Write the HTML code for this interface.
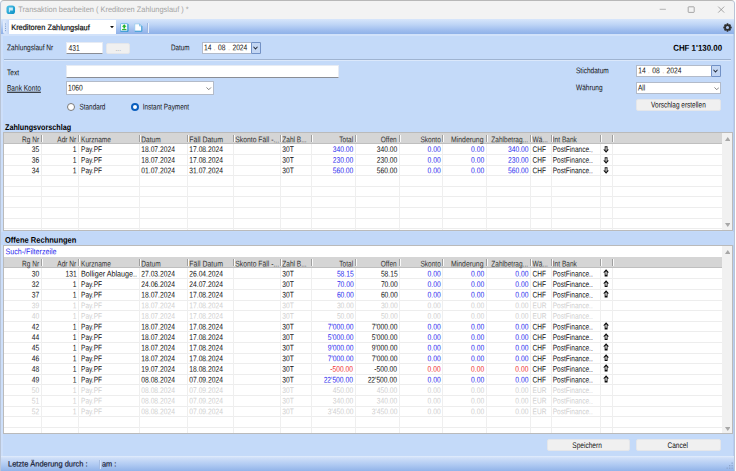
<!DOCTYPE html><html lang="de"><head><meta charset="utf-8"><title>Transaktion bearbeiten</title><style>
*{margin:0;padding:0;box-sizing:border-box}
html,body{width:736px;height:471px;overflow:hidden;background:#fff}
body{font-family:"Liberation Sans",sans-serif;position:relative}
#win{position:absolute;left:0;top:0;width:735px;height:472px;background:#c4daf9;border:1px solid #b9c4d6;border-top-color:#b8b8b8;border-bottom:none;border-radius:4px 4px 0 0;overflow:hidden}
#win div,#win span,#win svg{position:absolute}
.t{white-space:nowrap;line-height:10px;height:10px;font-size:8.2px;color:#111;transform-origin:0 50%}
.t.r{transform-origin:100% 50%}
.b{font-weight:bold;font-size:8.3px;color:#000}
.seg{font-size:8.4px}
.titlebar{background:#f3f3f3}
.toolbar{background:linear-gradient(#d7e6fb 0%,#bcd3f5 40%,#a3c0ef 70%,#8fb1e8 100%)}
.inp{background:#fff;border:1px solid #e6ebf4;border-bottom-color:#8a8d94}
.inp2{background:#fff;border:1px solid #b3bbc9}
.btn{background:#f0f0f0;border:1px solid #e4e6ea;border-radius:2px}
.tbl{background:#fff;border:1px solid #bababa;overflow:hidden}
.hdr{background:#d5d5d5;border-bottom:1px solid #bfbfbf}
.hl{background:#ededed;height:1px}
.vl{background:#efefef;width:1px}
.hs{background:#9f9f9f;width:1px;box-shadow:1px 0 0 #fafafa}
.sb{background:#f1f1f1}
.status{background:linear-gradient(#e3edfc 0%,#cfdff8 12%,#b3ccf3 50%,#8db0e8 100%)}
</style></head><body><div id="win">
<div id="c" style="left:-1px;top:-1px;width:736px;height:472px">
<div class="titlebar" style="left:0.00px;top:0.00px;width:736.00px;height:19.20px;"></div>
<svg style="left:6px;top:5px" width="9.500" height="9.500" viewBox="0 0 20 20"><defs><linearGradient id="ig" x1="0" y1="0" x2="1" y2="1"><stop offset="0" stop-color="#4fc3e8"/><stop offset="1" stop-color="#0a8fc4"/></linearGradient></defs><rect x="1" y="1" width="18" height="18" rx="6" fill="url(#ig)"/><path d="M6 5h8.500v6.500H8.200v4H6z" fill="#e8f7fd" fill-opacity=".85"/></svg>
<span class="t seg" style="top:4px;left:18px;transform:translate(0.30px,0.90px) scaleX(0.94) rotate(.03deg);color:#a4a4a4;font-size:7.9px;">Transaktion bearbeiten ( Kreditoren Zahlungslauf ) *</span>
<svg style="left:655px;top:3px" width="75" height="14" viewBox="0 0 75 14"><g stroke="#858585" stroke-width="0.7" fill="none"><path d="M4.700 6.300h6.200" stroke="#9a9a9a"/><rect x="33.2" y="3.8" width="6" height="5.6" rx="0.6"/><path d="M63.2 3.6l6 6M69.2 3.6l-6 6"/></g></svg>
<div class="toolbar" style="left:0.00px;top:19.30px;width:736.00px;height:14.70px;"></div>
<div class="" style="left:0.00px;top:34.00px;width:736.00px;height:1.50px;background:#d2e2fa"></div>
<div class="" style="left:2.50px;top:20.00px;width:6.50px;height:14.00px;background:linear-gradient(90deg,#e4edfc,#c3d7f6);border-radius:2px 0 0 2px"></div>
<svg style="left:4px;top:23px" width="3" height="9" viewBox="0 0 3 9"><g fill="#7f9fd0"><rect x="1" y="0.5" width="1" height="1"/><rect x="1" y="2.7" width="1" height="1"/><rect x="1" y="4.9" width="1" height="1"/><rect x="1" y="7.1" width="1" height="1"/></g></svg>
<div class="" style="left:9.00px;top:20.00px;width:107.30px;height:14.30px;background:#fff"></div>
<span class="t seg" style="top:23px;left:11px;transform:translate(0.20px,0.10px) scaleX(0.925) rotate(.03deg);color:#111;font-size:8px;-webkit-text-stroke:.22px #111;">Kreditoren Zahlungslauf</span>
<svg style="left:110px;top:26.2px" width="4" height="2.300" viewBox="0 0 5 3"><path d="M0 0h5L2.5 3z" fill="#111"/></svg>
<svg style="left:120px;top:22.800px" width="8.500" height="9.200" viewBox="0 0 17 18"><rect x="1" y="1" width="15" height="16" rx="1.500" fill="#f2f9fd" stroke="#5fb2e2" stroke-width="1.600"/><path d="M1 16.200h15M15.800 2v15" stroke="#2f94d0" stroke-width="2" fill="none"/><path d="M8.500 2.500l4.500 5h-2.800v3.500h-3.400V7.500H4z" fill="#22b222"/><rect x="4.200" y="11.800" width="8.600" height="2.200" fill="#35b535"/></svg>
<svg style="left:134.200px;top:22.800px" width="8.500" height="9.200" viewBox="0 0 17 18"><path d="M1.500 1.500h9.500l4.500 4.500v10.500h-14z" fill="#fdfeff" stroke="#8cc6ea" stroke-width="1.400"/><path d="M1.500 16.300h14M15.600 6v10.500" stroke="#3a9ad4" stroke-width="2" fill="none"/><path d="M11 1.500v4.500h4.500z" fill="#cfe6f7" stroke="#58aee0" stroke-width="1"/></svg>
<div class="" style="left:147.50px;top:23.00px;width:1.00px;height:9.50px;background:#e6eefa;box-shadow:-1px 0 0 #9db6e0"></div>
<svg style="left:722.8px;top:22.7px" width="9" height="9" viewBox="-10 -10 20 20"><g fill="#2e2e2e"><rect x="-2" y="-9.300" width="4" height="4" rx=".8" transform="rotate(0)"/><rect x="-2" y="-9.300" width="4" height="4" rx=".8" transform="rotate(45)"/><rect x="-2" y="-9.300" width="4" height="4" rx=".8" transform="rotate(90)"/><rect x="-2" y="-9.300" width="4" height="4" rx=".8" transform="rotate(135)"/><rect x="-2" y="-9.300" width="4" height="4" rx=".8" transform="rotate(180)"/><rect x="-2" y="-9.300" width="4" height="4" rx=".8" transform="rotate(225)"/><rect x="-2" y="-9.300" width="4" height="4" rx=".8" transform="rotate(270)"/><rect x="-2" y="-9.300" width="4" height="4" rx=".8" transform="rotate(315)"/></g><circle r="5.300" fill="none" stroke="#2e2e2e" stroke-width="3.800"/></svg>
<div class="" style="left:0.80px;top:34.30px;width:1.80px;height:421.70px;background:#cddffa"></div>
<div class="" style="left:733.00px;top:34.30px;width:2.00px;height:421.70px;background:#b7cef3"></div>
<span class="t g" style="top:43px;left:7px;transform:translate(0.00px,0.20px) scaleX(0.8) rotate(.03deg);">Zahlungslauf Nr</span>
<div class="inp" style="left:66.00px;top:42.00px;width:37.30px;height:12.40px;"></div>
<span class="t g" style="top:43px;left:68px;transform:translate(0.50px,0.70px) scaleX(0.82) rotate(.03deg);">431</span>
<div class="btn" style="left:106.00px;top:42.80px;width:24.20px;height:11.50px;"></div>
<span class="t g" style="top:43px;left:115px;transform:translate(0.50px,0.80px) scaleX(0.8) rotate(.03deg);color:#999;">...</span>
<span class="t g" style="top:43px;left:171px;transform:translate(0.00px,0.20px) scaleX(0.77) rotate(.03deg);">Datum</span>
<div class="inp2" style="left:201.80px;top:41.70px;width:59.20px;height:12.50px;"></div>
<span class="t g" style="top:43px;left:204px;transform:translate(0.00px,0.25px) scaleX(0.82) rotate(.03deg);">14</span>
<span class="t g" style="top:43px;left:213px;transform:translate(0.80px,0.25px) scaleX(0.8) rotate(.03deg);color:#c8906a;">.</span>
<span class="t g" style="top:43px;left:218px;transform:translate(0.00px,0.25px) scaleX(0.82) rotate(.03deg);">08</span>
<span class="t g" style="top:43px;left:228px;transform:translate(0.30px,0.25px) scaleX(0.8) rotate(.03deg);color:#c8906a;">.</span>
<span class="t g" style="top:43px;left:232px;transform:translate(0.40px,0.25px) scaleX(0.82) rotate(.03deg);">2024</span>
<div class="" style="left:250.50px;top:41.70px;width:10.50px;height:12.50px;background:#c3d6f3;border:1px solid #7291c6;border-radius:1px"></div>
<svg style="left:252.70px;top:46.45px" width="5" height="4" viewBox="0 0 10 8"><path d="M1 1.500l4 4.500 4-4.500" fill="none" stroke="#252c3a" stroke-width="2.100"/></svg>
<span class="t b r" style="top:42px;right:13px;transform:translate(-0.50px,0.70px) scaleX(0.93) rotate(.03deg);font-size:8.5px;">CHF 1'130.00</span>
<div class="" style="left:4.00px;top:58.80px;width:727.00px;height:1.00px;background:#9fb3d0;box-shadow:0 1px 0 #dbe8fb"></div>
<span class="t g" style="top:68px;left:7px;transform:translate(0.00px,0.30px) scaleX(0.8) rotate(.03deg);">Text</span>
<div class="inp" style="left:66.00px;top:65.30px;width:272.70px;height:12.30px;"></div>
<span class="t g" style="top:83px;left:7px;transform:translate(0.00px,0.80px) scaleX(0.8) rotate(.03deg);text-decoration:underline;">Bank Konto</span>
<div class="inp2" style="left:66.00px;top:81.30px;width:147.60px;height:13.30px;"></div>
<span class="t g" style="top:83px;left:67px;transform:translate(0.90px,0.55px) scaleX(0.82) rotate(.03deg);">1060</span>
<svg style="left:206.00px;top:86.75px" width="5.500" height="3.600" viewBox="0 0 12 8"><path d="M1 1l5 5 5-5" fill="none" stroke="#6c6c6c" stroke-width="1.900"/></svg>
<div class="" style="left:67.00px;top:103.00px;width:8.00px;height:8.00px;background:#fff;border:1px solid #7a7a7a;border-radius:50%"></div>
<span class="t g" style="top:102px;left:79px;transform:translate(0.50px,0.50px) scaleX(0.78) rotate(.03deg);">Standard</span>
<div class="" style="left:130.60px;top:103.10px;width:8.30px;height:8.30px;background:#fff;border:2.800px solid #0b5fbe;border-radius:50%"></div>
<span class="t g" style="top:102px;left:142px;transform:translate(0.70px,0.50px) scaleX(0.785) rotate(.03deg);">Instant Payment</span>
<span class="t g" style="top:66px;left:576px;transform:translate(0.00px,0.30px) scaleX(0.8) rotate(.03deg);">Stichdatum</span>
<div class="inp2" style="left:636.00px;top:65.00px;width:85.30px;height:11.80px;"></div>
<span class="t g" style="top:66px;left:638px;transform:translate(0.20px,0.20px) scaleX(0.82) rotate(.03deg);">14</span>
<span class="t g" style="top:66px;left:648px;transform:translate(0.00px,0.20px) scaleX(0.8) rotate(.03deg);color:#c8906a;">.</span>
<span class="t g" style="top:66px;left:652px;transform:translate(0.20px,0.20px) scaleX(0.82) rotate(.03deg);">08</span>
<span class="t g" style="top:66px;left:662px;transform:translate(0.50px,0.20px) scaleX(0.8) rotate(.03deg);color:#c8906a;">.</span>
<span class="t g" style="top:66px;left:666px;transform:translate(0.60px,0.20px) scaleX(0.82) rotate(.03deg);">2024</span>
<div class="" style="left:710.80px;top:65.00px;width:10.50px;height:11.80px;background:#c3d6f3;border:1px solid #7291c6;border-radius:1px"></div>
<svg style="left:713.00px;top:69.40px" width="5" height="4" viewBox="0 0 10 8"><path d="M1 1.500l4 4.500 4-4.500" fill="none" stroke="#252c3a" stroke-width="2.100"/></svg>
<span class="t g" style="top:83px;left:576px;transform:translate(0.00px,0.30px) scaleX(0.8) rotate(.03deg);">Währung</span>
<div class="inp2" style="left:636.00px;top:81.80px;width:85.30px;height:12.40px;"></div>
<span class="t g" style="top:83px;left:637px;transform:translate(0.90px,0.60px) scaleX(0.8) rotate(.03deg);">All</span>
<svg style="left:713.70px;top:86.80px" width="5.500" height="3.600" viewBox="0 0 12 8"><path d="M1 1l5 5 5-5" fill="none" stroke="#6c6c6c" stroke-width="1.900"/></svg>
<div class="btn" style="left:636.00px;top:99.20px;width:85.30px;height:11.60px;"></div>
<span class="t g" style="top:100px;left:651px;transform:translate(0.10px,0.40px) scaleX(0.79) rotate(.03deg);">Vorschlag erstellen</span>
<span class="t b" style="top:122px;left:5px;transform:translate(0.00px,0.00px) scaleX(0.87) rotate(.03deg);">Zahlungsvorschlag</span>
<div class="tbl" style="left:3.00px;top:132.00px;width:729.50px;height:98.60px;"></div>
<div class="hdr" style="left:4.00px;top:133.00px;width:717.50px;height:10.90px;"></div>
<span class="t g r" style="top:135px;right:697px;transform:translate(-0.20px,0.35px) scaleX(0.8) rotate(.03deg);color:#333;">Rg Nr</span>
<span class="t g r" style="top:135px;right:659px;transform:translate(-0.45px,0.35px) scaleX(0.8) rotate(.03deg);color:#333;">Adr Nr</span>
<span class="t g" style="top:135px;left:81px;transform:translate(0.05px,0.35px) scaleX(0.8) rotate(.03deg);color:#333;">Kurzname</span>
<span class="t g" style="top:135px;left:141px;transform:translate(0.30px,0.35px) scaleX(0.8) rotate(.03deg);color:#333;">Datum</span>
<span class="t g" style="top:135px;left:189px;transform:translate(0.30px,0.35px) scaleX(0.85) rotate(.03deg);color:#333;">Fäll Datum</span>
<span class="t g" style="top:135px;left:235px;transform:translate(0.30px,0.35px) scaleX(0.83) rotate(.03deg);color:#333;">Skonto Fäll -...</span>
<span class="t g" style="top:135px;left:282px;transform:translate(0.30px,0.35px) scaleX(0.8) rotate(.03deg);color:#333;">Zahl B...</span>
<span class="t g r" style="top:135px;right:383px;transform:translate(-0.20px,0.35px) scaleX(0.8) rotate(.03deg);color:#333;">Total</span>
<span class="t g r" style="top:135px;right:339px;transform:translate(-0.20px,0.35px) scaleX(0.8) rotate(.03deg);color:#333;">Offen</span>
<span class="t g r" style="top:135px;right:295px;transform:translate(-0.70px,0.35px) scaleX(0.8) rotate(.03deg);color:#333;">Skonto</span>
<span class="t g r" style="top:135px;right:252px;transform:translate(-0.20px,0.35px) scaleX(0.84) rotate(.03deg);color:#333;">Minderung</span>
<span class="t g r" style="top:135px;right:207px;transform:translate(-0.90px,0.35px) scaleX(0.8) rotate(.03deg);color:#333;">Zahlbetrag...</span>
<span class="t g" style="top:135px;left:532px;transform:translate(0.60px,0.35px) scaleX(0.8) rotate(.03deg);color:#333;">Wä...</span>
<span class="t g" style="top:135px;left:552px;transform:translate(0.80px,0.35px) scaleX(0.8) rotate(.03deg);color:#333;">Int Bank</span>
<div class="hs" style="left:40.50px;top:135.00px;width:1.00px;height:6.70px;"></div>
<div class="hs" style="left:78.25px;top:135.00px;width:1.00px;height:6.70px;"></div>
<div class="hs" style="left:138.50px;top:135.00px;width:1.00px;height:6.70px;"></div>
<div class="hs" style="left:186.50px;top:135.00px;width:1.00px;height:6.70px;"></div>
<div class="hs" style="left:232.50px;top:135.00px;width:1.00px;height:6.70px;"></div>
<div class="hs" style="left:279.50px;top:135.00px;width:1.00px;height:6.70px;"></div>
<div class="hs" style="left:310.50px;top:135.00px;width:1.00px;height:6.70px;"></div>
<div class="hs" style="left:354.50px;top:135.00px;width:1.00px;height:6.70px;"></div>
<div class="hs" style="left:398.50px;top:135.00px;width:1.00px;height:6.70px;"></div>
<div class="hs" style="left:442.00px;top:135.00px;width:1.00px;height:6.70px;"></div>
<div class="hs" style="left:485.50px;top:135.00px;width:1.00px;height:6.70px;"></div>
<div class="hs" style="left:529.80px;top:135.00px;width:1.00px;height:6.70px;"></div>
<div class="hs" style="left:550.50px;top:135.00px;width:1.00px;height:6.70px;"></div>
<div class="hs" style="left:599.50px;top:135.00px;width:1.00px;height:6.70px;"></div>
<div class="hs" style="left:612.00px;top:135.00px;width:1.00px;height:6.70px;"></div>
<div class="hl" style="left:4.00px;top:154.00px;width:717.50px;height:1.00px;"></div>
<span class="t g r" style="top:145px;right:696px;transform:translate(-0.80px,0.10px) scaleX(0.82) rotate(.03deg);color:#111;">35</span>
<span class="t g r" style="top:145px;right:659px;transform:translate(-0.05px,0.10px) scaleX(0.82) rotate(.03deg);color:#111;">1</span>
<span class="t g" style="top:145px;left:81px;transform:translate(0.05px,0.10px) scaleX(0.8) rotate(.03deg);color:#111;">Pay.PF</span>
<span class="t g" style="top:145px;left:141px;transform:translate(0.30px,0.10px) scaleX(0.82) rotate(.03deg);color:#111;">18.07.2024</span>
<span class="t g" style="top:145px;left:189px;transform:translate(0.30px,0.10px) scaleX(0.82) rotate(.03deg);color:#111;">17.08.2024</span>
<span class="t g" style="top:145px;left:282px;transform:translate(0.30px,0.10px) scaleX(0.82) rotate(.03deg);color:#111;">30T</span>
<span class="t g r" style="top:145px;right:382px;transform:translate(-0.80px,0.10px) scaleX(0.82) rotate(.03deg);color:#2a2aee;">340.00</span>
<span class="t g r" style="top:145px;right:338px;transform:translate(-0.80px,0.10px) scaleX(0.82) rotate(.03deg);color:#111;">340.00</span>
<span class="t g r" style="top:145px;right:295px;transform:translate(-0.30px,0.10px) scaleX(0.82) rotate(.03deg);color:#2a2aee;">0.00</span>
<span class="t g r" style="top:145px;right:251px;transform:translate(-0.80px,0.10px) scaleX(0.82) rotate(.03deg);color:#2a2aee;">0.00</span>
<span class="t g r" style="top:145px;right:207px;transform:translate(-0.50px,0.10px) scaleX(0.82) rotate(.03deg);color:#2a2aee;">340.00</span>
<span class="t g" style="top:145px;left:532px;transform:translate(0.60px,0.10px) scaleX(0.8) rotate(.03deg);color:#111;">CHF</span>
<span class="t g" style="top:145px;left:552px;transform:translate(0.70px,0.10px) scaleX(0.8) rotate(.03deg);color:#111;">PostFinance..</span>
<svg style="left:602.90px;top:146.00px" width="6.200" height="7" viewBox="0 0 12 14"><path d="M6 13.700L.3 7.200h2.900V.5h5.600v6.700h2.900z" fill="#0a0a0a"/><path d="M6 10.400L4.700 8V2.600h2.600V8z" fill="#d8d8d8"/></svg>
<div class="hl" style="left:4.00px;top:164.60px;width:717.50px;height:1.00px;"></div>
<span class="t g r" style="top:155px;right:696px;transform:translate(-0.80px,0.70px) scaleX(0.82) rotate(.03deg);color:#111;">36</span>
<span class="t g r" style="top:155px;right:659px;transform:translate(-0.05px,0.70px) scaleX(0.82) rotate(.03deg);color:#111;">1</span>
<span class="t g" style="top:155px;left:81px;transform:translate(0.05px,0.70px) scaleX(0.8) rotate(.03deg);color:#111;">Pay.PF</span>
<span class="t g" style="top:155px;left:141px;transform:translate(0.30px,0.70px) scaleX(0.82) rotate(.03deg);color:#111;">18.07.2024</span>
<span class="t g" style="top:155px;left:189px;transform:translate(0.30px,0.70px) scaleX(0.82) rotate(.03deg);color:#111;">17.08.2024</span>
<span class="t g" style="top:155px;left:282px;transform:translate(0.30px,0.70px) scaleX(0.82) rotate(.03deg);color:#111;">30T</span>
<span class="t g r" style="top:155px;right:382px;transform:translate(-0.80px,0.70px) scaleX(0.82) rotate(.03deg);color:#2a2aee;">230.00</span>
<span class="t g r" style="top:155px;right:338px;transform:translate(-0.80px,0.70px) scaleX(0.82) rotate(.03deg);color:#111;">230.00</span>
<span class="t g r" style="top:155px;right:295px;transform:translate(-0.30px,0.70px) scaleX(0.82) rotate(.03deg);color:#2a2aee;">0.00</span>
<span class="t g r" style="top:155px;right:251px;transform:translate(-0.80px,0.70px) scaleX(0.82) rotate(.03deg);color:#2a2aee;">0.00</span>
<span class="t g r" style="top:155px;right:207px;transform:translate(-0.50px,0.70px) scaleX(0.82) rotate(.03deg);color:#2a2aee;">230.00</span>
<span class="t g" style="top:155px;left:532px;transform:translate(0.60px,0.70px) scaleX(0.8) rotate(.03deg);color:#111;">CHF</span>
<span class="t g" style="top:155px;left:552px;transform:translate(0.70px,0.70px) scaleX(0.8) rotate(.03deg);color:#111;">PostFinance..</span>
<svg style="left:602.90px;top:156.60px" width="6.200" height="7" viewBox="0 0 12 14"><path d="M6 13.700L.3 7.200h2.900V.5h5.600v6.700h2.900z" fill="#0a0a0a"/><path d="M6 10.400L4.700 8V2.600h2.600V8z" fill="#d8d8d8"/></svg>
<div class="hl" style="left:4.00px;top:175.20px;width:717.50px;height:1.00px;"></div>
<span class="t g r" style="top:166px;right:696px;transform:translate(-0.80px,0.30px) scaleX(0.82) rotate(.03deg);color:#111;">34</span>
<span class="t g r" style="top:166px;right:659px;transform:translate(-0.05px,0.30px) scaleX(0.82) rotate(.03deg);color:#111;">1</span>
<span class="t g" style="top:166px;left:81px;transform:translate(0.05px,0.30px) scaleX(0.8) rotate(.03deg);color:#111;">Pay.PF</span>
<span class="t g" style="top:166px;left:141px;transform:translate(0.30px,0.30px) scaleX(0.82) rotate(.03deg);color:#111;">01.07.2024</span>
<span class="t g" style="top:166px;left:189px;transform:translate(0.30px,0.30px) scaleX(0.82) rotate(.03deg);color:#111;">31.07.2024</span>
<span class="t g" style="top:166px;left:282px;transform:translate(0.30px,0.30px) scaleX(0.82) rotate(.03deg);color:#111;">30T</span>
<span class="t g r" style="top:166px;right:382px;transform:translate(-0.80px,0.30px) scaleX(0.82) rotate(.03deg);color:#2a2aee;">560.00</span>
<span class="t g r" style="top:166px;right:338px;transform:translate(-0.80px,0.30px) scaleX(0.82) rotate(.03deg);color:#111;">560.00</span>
<span class="t g r" style="top:166px;right:295px;transform:translate(-0.30px,0.30px) scaleX(0.82) rotate(.03deg);color:#2a2aee;">0.00</span>
<span class="t g r" style="top:166px;right:251px;transform:translate(-0.80px,0.30px) scaleX(0.82) rotate(.03deg);color:#2a2aee;">0.00</span>
<span class="t g r" style="top:166px;right:207px;transform:translate(-0.50px,0.30px) scaleX(0.82) rotate(.03deg);color:#2a2aee;">560.00</span>
<span class="t g" style="top:166px;left:532px;transform:translate(0.60px,0.30px) scaleX(0.8) rotate(.03deg);color:#111;">CHF</span>
<span class="t g" style="top:166px;left:552px;transform:translate(0.70px,0.30px) scaleX(0.8) rotate(.03deg);color:#111;">PostFinance..</span>
<svg style="left:602.90px;top:167.20px" width="6.200" height="7" viewBox="0 0 12 14"><path d="M6 13.700L.3 7.200h2.900V.5h5.600v6.700h2.900z" fill="#0a0a0a"/><path d="M6 10.400L4.700 8V2.600h2.600V8z" fill="#d8d8d8"/></svg>
<div class="hl" style="left:4.00px;top:185.80px;width:717.50px;height:1.00px;"></div>
<div class="hl" style="left:4.00px;top:196.40px;width:717.50px;height:1.00px;"></div>
<div class="hl" style="left:4.00px;top:207.00px;width:717.50px;height:1.00px;"></div>
<div class="hl" style="left:4.00px;top:217.60px;width:717.50px;height:1.00px;"></div>
<div class="hl" style="left:4.00px;top:228.20px;width:717.50px;height:1.00px;"></div>
<div class="vl" style="left:40.50px;top:143.90px;width:1.00px;height:85.70px;"></div>
<div class="vl" style="left:78.25px;top:143.90px;width:1.00px;height:85.70px;"></div>
<div class="vl" style="left:138.50px;top:143.90px;width:1.00px;height:85.70px;"></div>
<div class="vl" style="left:186.50px;top:143.90px;width:1.00px;height:85.70px;"></div>
<div class="vl" style="left:232.50px;top:143.90px;width:1.00px;height:85.70px;"></div>
<div class="vl" style="left:279.50px;top:143.90px;width:1.00px;height:85.70px;"></div>
<div class="vl" style="left:310.50px;top:143.90px;width:1.00px;height:85.70px;"></div>
<div class="vl" style="left:354.50px;top:143.90px;width:1.00px;height:85.70px;"></div>
<div class="vl" style="left:398.50px;top:143.90px;width:1.00px;height:85.70px;"></div>
<div class="vl" style="left:442.00px;top:143.90px;width:1.00px;height:85.70px;"></div>
<div class="vl" style="left:485.50px;top:143.90px;width:1.00px;height:85.70px;"></div>
<div class="vl" style="left:529.80px;top:143.90px;width:1.00px;height:85.70px;"></div>
<div class="vl" style="left:550.50px;top:143.90px;width:1.00px;height:85.70px;"></div>
<div class="vl" style="left:599.50px;top:143.90px;width:1.00px;height:85.70px;"></div>
<div class="vl" style="left:612.00px;top:143.90px;width:1.00px;height:85.70px;"></div>
<div class="sb" style="left:721.50px;top:133.00px;width:10.00px;height:96.60px;"></div>
<svg style="left:724.50px;top:137.30px" width="5.500" height="4" viewBox="0 0 10 7"><path d="M0 7h10L5 0z" fill="#a8a8a8"/></svg>
<svg style="left:724.50px;top:223.20px" width="5.500" height="4" viewBox="0 0 10 7"><path d="M0 0h10L5 7z" fill="#a8a8a8"/></svg>
<div class="" style="left:0.00px;top:231.50px;width:736.00px;height:13.00px;background:#c2d8f8"></div>
<span class="t b" style="top:234px;left:5px;transform:translate(0.00px,0.80px) scaleX(0.905) rotate(.03deg);">Offene Rechnungen</span>
<div class="tbl" style="left:3.00px;top:244.80px;width:729.50px;height:189.50px;"></div>
<span class="t g" style="top:247px;left:5px;transform:translate(0.50px,0.30px) scaleX(0.87) rotate(.03deg);color:#2a2aee;">Such-/Filterzeile</span>
<div class="hdr" style="left:4.00px;top:257.00px;width:717.50px;height:11.20px;"></div>
<span class="t g r" style="top:259px;right:697px;transform:translate(-0.20px,0.50px) scaleX(0.8) rotate(.03deg);color:#333;">Rg Nr</span>
<span class="t g r" style="top:259px;right:659px;transform:translate(-0.45px,0.50px) scaleX(0.8) rotate(.03deg);color:#333;">Adr Nr</span>
<span class="t g" style="top:259px;left:81px;transform:translate(0.05px,0.50px) scaleX(0.8) rotate(.03deg);color:#333;">Kurzname</span>
<span class="t g" style="top:259px;left:141px;transform:translate(0.30px,0.50px) scaleX(0.8) rotate(.03deg);color:#333;">Datum</span>
<span class="t g" style="top:259px;left:189px;transform:translate(0.30px,0.50px) scaleX(0.85) rotate(.03deg);color:#333;">Fäll Datum</span>
<span class="t g" style="top:259px;left:235px;transform:translate(0.30px,0.50px) scaleX(0.83) rotate(.03deg);color:#333;">Skonto Fäll -...</span>
<span class="t g" style="top:259px;left:282px;transform:translate(0.30px,0.50px) scaleX(0.8) rotate(.03deg);color:#333;">Zahl B...</span>
<span class="t g r" style="top:259px;right:383px;transform:translate(-0.20px,0.50px) scaleX(0.8) rotate(.03deg);color:#333;">Total</span>
<span class="t g r" style="top:259px;right:339px;transform:translate(-0.20px,0.50px) scaleX(0.8) rotate(.03deg);color:#333;">Offen</span>
<span class="t g r" style="top:259px;right:295px;transform:translate(-0.70px,0.50px) scaleX(0.8) rotate(.03deg);color:#333;">Skonto</span>
<span class="t g r" style="top:259px;right:252px;transform:translate(-0.20px,0.50px) scaleX(0.84) rotate(.03deg);color:#333;">Minderung</span>
<span class="t g r" style="top:259px;right:207px;transform:translate(-0.90px,0.50px) scaleX(0.8) rotate(.03deg);color:#333;">Zahlbetrag...</span>
<span class="t g" style="top:259px;left:532px;transform:translate(0.60px,0.50px) scaleX(0.8) rotate(.03deg);color:#333;">Wä...</span>
<span class="t g" style="top:259px;left:552px;transform:translate(0.80px,0.50px) scaleX(0.8) rotate(.03deg);color:#333;">Int Bank</span>
<div class="hs" style="left:40.50px;top:259.00px;width:1.00px;height:7.00px;"></div>
<div class="hs" style="left:78.25px;top:259.00px;width:1.00px;height:7.00px;"></div>
<div class="hs" style="left:138.50px;top:259.00px;width:1.00px;height:7.00px;"></div>
<div class="hs" style="left:186.50px;top:259.00px;width:1.00px;height:7.00px;"></div>
<div class="hs" style="left:232.50px;top:259.00px;width:1.00px;height:7.00px;"></div>
<div class="hs" style="left:279.50px;top:259.00px;width:1.00px;height:7.00px;"></div>
<div class="hs" style="left:310.50px;top:259.00px;width:1.00px;height:7.00px;"></div>
<div class="hs" style="left:354.50px;top:259.00px;width:1.00px;height:7.00px;"></div>
<div class="hs" style="left:398.50px;top:259.00px;width:1.00px;height:7.00px;"></div>
<div class="hs" style="left:442.00px;top:259.00px;width:1.00px;height:7.00px;"></div>
<div class="hs" style="left:485.50px;top:259.00px;width:1.00px;height:7.00px;"></div>
<div class="hs" style="left:529.80px;top:259.00px;width:1.00px;height:7.00px;"></div>
<div class="hs" style="left:550.50px;top:259.00px;width:1.00px;height:7.00px;"></div>
<div class="hs" style="left:599.50px;top:259.00px;width:1.00px;height:7.00px;"></div>
<div class="hs" style="left:612.00px;top:259.00px;width:1.00px;height:7.00px;"></div>
<div class="hl" style="left:4.00px;top:278.30px;width:717.50px;height:1.00px;"></div>
<span class="t g r" style="top:269px;right:696px;transform:translate(-0.80px,0.40px) scaleX(0.82) rotate(.03deg);color:#111;">30</span>
<span class="t g r" style="top:269px;right:659px;transform:translate(-0.05px,0.40px) scaleX(0.82) rotate(.03deg);color:#111;">131</span>
<span class="t g" style="top:269px;left:81px;transform:translate(0.05px,0.40px) scaleX(0.88) rotate(.03deg);color:#111;">Bolliger Ablauge..</span>
<span class="t g" style="top:269px;left:141px;transform:translate(0.30px,0.40px) scaleX(0.82) rotate(.03deg);color:#111;">27.03.2024</span>
<span class="t g" style="top:269px;left:189px;transform:translate(0.30px,0.40px) scaleX(0.82) rotate(.03deg);color:#111;">26.04.2024</span>
<span class="t g" style="top:269px;left:282px;transform:translate(0.30px,0.40px) scaleX(0.82) rotate(.03deg);color:#111;">30T</span>
<span class="t g r" style="top:269px;right:382px;transform:translate(-0.80px,0.40px) scaleX(0.82) rotate(.03deg);color:#2a2aee;">58.15</span>
<span class="t g r" style="top:269px;right:338px;transform:translate(-0.80px,0.40px) scaleX(0.82) rotate(.03deg);color:#111;">58.15</span>
<span class="t g r" style="top:269px;right:295px;transform:translate(-0.30px,0.40px) scaleX(0.82) rotate(.03deg);color:#2a2aee;">0.00</span>
<span class="t g r" style="top:269px;right:251px;transform:translate(-0.80px,0.40px) scaleX(0.82) rotate(.03deg);color:#2a2aee;">0.00</span>
<span class="t g r" style="top:269px;right:207px;transform:translate(-0.50px,0.40px) scaleX(0.82) rotate(.03deg);color:#2a2aee;">0.00</span>
<span class="t g" style="top:269px;left:532px;transform:translate(0.60px,0.40px) scaleX(0.8) rotate(.03deg);color:#111;">CHF</span>
<span class="t g" style="top:269px;left:552px;transform:translate(0.70px,0.40px) scaleX(0.8) rotate(.03deg);color:#111;">PostFinance..</span>
<svg style="left:602.90px;top:268.90px" width="6.200" height="7.800" viewBox="0 0 12 15"><path d="M6 .3L.3 6.800h2.900V14.500h5.600V6.800h2.900z" fill="#0a0a0a"/><path d="M6 3.600L4.700 6v5.300h2.600V6z" fill="#d8d8d8"/></svg>
<div class="hl" style="left:4.00px;top:288.90px;width:717.50px;height:1.00px;"></div>
<span class="t g r" style="top:280px;right:696px;transform:translate(-0.80px,0.00px) scaleX(0.82) rotate(.03deg);color:#111;">32</span>
<span class="t g r" style="top:280px;right:659px;transform:translate(-0.05px,0.00px) scaleX(0.82) rotate(.03deg);color:#111;">1</span>
<span class="t g" style="top:280px;left:81px;transform:translate(0.05px,0.00px) scaleX(0.8) rotate(.03deg);color:#111;">Pay.PF</span>
<span class="t g" style="top:280px;left:141px;transform:translate(0.30px,0.00px) scaleX(0.82) rotate(.03deg);color:#111;">24.06.2024</span>
<span class="t g" style="top:280px;left:189px;transform:translate(0.30px,0.00px) scaleX(0.82) rotate(.03deg);color:#111;">24.07.2024</span>
<span class="t g" style="top:280px;left:282px;transform:translate(0.30px,0.00px) scaleX(0.82) rotate(.03deg);color:#111;">30T</span>
<span class="t g r" style="top:280px;right:382px;transform:translate(-0.80px,0.00px) scaleX(0.82) rotate(.03deg);color:#2a2aee;">70.00</span>
<span class="t g r" style="top:280px;right:338px;transform:translate(-0.80px,0.00px) scaleX(0.82) rotate(.03deg);color:#111;">70.00</span>
<span class="t g r" style="top:280px;right:295px;transform:translate(-0.30px,0.00px) scaleX(0.82) rotate(.03deg);color:#2a2aee;">0.00</span>
<span class="t g r" style="top:280px;right:251px;transform:translate(-0.80px,0.00px) scaleX(0.82) rotate(.03deg);color:#2a2aee;">0.00</span>
<span class="t g r" style="top:280px;right:207px;transform:translate(-0.50px,0.00px) scaleX(0.82) rotate(.03deg);color:#2a2aee;">0.00</span>
<span class="t g" style="top:280px;left:532px;transform:translate(0.60px,0.00px) scaleX(0.8) rotate(.03deg);color:#111;">CHF</span>
<span class="t g" style="top:280px;left:552px;transform:translate(0.70px,0.00px) scaleX(0.8) rotate(.03deg);color:#111;">PostFinance..</span>
<svg style="left:602.90px;top:279.50px" width="6.200" height="7.800" viewBox="0 0 12 15"><path d="M6 .3L.3 6.800h2.900V14.500h5.600V6.800h2.900z" fill="#0a0a0a"/><path d="M6 3.600L4.700 6v5.300h2.600V6z" fill="#d8d8d8"/></svg>
<div class="hl" style="left:4.00px;top:299.50px;width:717.50px;height:1.00px;"></div>
<span class="t g r" style="top:290px;right:696px;transform:translate(-0.80px,0.60px) scaleX(0.82) rotate(.03deg);color:#111;">37</span>
<span class="t g r" style="top:290px;right:659px;transform:translate(-0.05px,0.60px) scaleX(0.82) rotate(.03deg);color:#111;">1</span>
<span class="t g" style="top:290px;left:81px;transform:translate(0.05px,0.60px) scaleX(0.8) rotate(.03deg);color:#111;">Pay.PF</span>
<span class="t g" style="top:290px;left:141px;transform:translate(0.30px,0.60px) scaleX(0.82) rotate(.03deg);color:#111;">18.07.2024</span>
<span class="t g" style="top:290px;left:189px;transform:translate(0.30px,0.60px) scaleX(0.82) rotate(.03deg);color:#111;">17.08.2024</span>
<span class="t g" style="top:290px;left:282px;transform:translate(0.30px,0.60px) scaleX(0.82) rotate(.03deg);color:#111;">30T</span>
<span class="t g r" style="top:290px;right:382px;transform:translate(-0.80px,0.60px) scaleX(0.82) rotate(.03deg);color:#2a2aee;">60.00</span>
<span class="t g r" style="top:290px;right:338px;transform:translate(-0.80px,0.60px) scaleX(0.82) rotate(.03deg);color:#111;">60.00</span>
<span class="t g r" style="top:290px;right:295px;transform:translate(-0.30px,0.60px) scaleX(0.82) rotate(.03deg);color:#2a2aee;">0.00</span>
<span class="t g r" style="top:290px;right:251px;transform:translate(-0.80px,0.60px) scaleX(0.82) rotate(.03deg);color:#2a2aee;">0.00</span>
<span class="t g r" style="top:290px;right:207px;transform:translate(-0.50px,0.60px) scaleX(0.82) rotate(.03deg);color:#2a2aee;">0.00</span>
<span class="t g" style="top:290px;left:532px;transform:translate(0.60px,0.60px) scaleX(0.8) rotate(.03deg);color:#111;">CHF</span>
<span class="t g" style="top:290px;left:552px;transform:translate(0.70px,0.60px) scaleX(0.8) rotate(.03deg);color:#111;">PostFinance..</span>
<svg style="left:602.90px;top:290.10px" width="6.200" height="7.800" viewBox="0 0 12 15"><path d="M6 .3L.3 6.800h2.900V14.500h5.600V6.800h2.900z" fill="#0a0a0a"/><path d="M6 3.600L4.700 6v5.300h2.600V6z" fill="#d8d8d8"/></svg>
<div class="hl" style="left:4.00px;top:310.10px;width:717.50px;height:1.00px;"></div>
<span class="t g r" style="top:301px;right:696px;transform:translate(-0.80px,0.20px) scaleX(0.82) rotate(.03deg);color:#cfcfcf;">39</span>
<span class="t g r" style="top:301px;right:659px;transform:translate(-0.05px,0.20px) scaleX(0.82) rotate(.03deg);color:#cfcfcf;">1</span>
<span class="t g" style="top:301px;left:81px;transform:translate(0.05px,0.20px) scaleX(0.8) rotate(.03deg);color:#cfcfcf;">Pay.PF</span>
<span class="t g" style="top:301px;left:141px;transform:translate(0.30px,0.20px) scaleX(0.82) rotate(.03deg);color:#cfcfcf;">18.07.2024</span>
<span class="t g" style="top:301px;left:189px;transform:translate(0.30px,0.20px) scaleX(0.82) rotate(.03deg);color:#cfcfcf;">17.08.2024</span>
<span class="t g" style="top:301px;left:282px;transform:translate(0.30px,0.20px) scaleX(0.82) rotate(.03deg);color:#cfcfcf;">30T</span>
<span class="t g r" style="top:301px;right:382px;transform:translate(-0.80px,0.20px) scaleX(0.82) rotate(.03deg);color:#cfcfcf;">30.00</span>
<span class="t g r" style="top:301px;right:338px;transform:translate(-0.80px,0.20px) scaleX(0.82) rotate(.03deg);color:#cfcfcf;">30.00</span>
<span class="t g r" style="top:301px;right:295px;transform:translate(-0.30px,0.20px) scaleX(0.82) rotate(.03deg);color:#cfcfcf;">0.00</span>
<span class="t g r" style="top:301px;right:251px;transform:translate(-0.80px,0.20px) scaleX(0.82) rotate(.03deg);color:#cfcfcf;">0.00</span>
<span class="t g r" style="top:301px;right:207px;transform:translate(-0.50px,0.20px) scaleX(0.82) rotate(.03deg);color:#cfcfcf;">0.00</span>
<span class="t g" style="top:301px;left:532px;transform:translate(0.60px,0.20px) scaleX(0.8) rotate(.03deg);color:#cfcfcf;">EUR</span>
<span class="t g" style="top:301px;left:552px;transform:translate(0.70px,0.20px) scaleX(0.8) rotate(.03deg);color:#cfcfcf;">PostFinance..</span>
<div class="hl" style="left:4.00px;top:320.70px;width:717.50px;height:1.00px;"></div>
<span class="t g r" style="top:311px;right:696px;transform:translate(-0.80px,0.80px) scaleX(0.82) rotate(.03deg);color:#cfcfcf;">40</span>
<span class="t g r" style="top:311px;right:659px;transform:translate(-0.05px,0.80px) scaleX(0.82) rotate(.03deg);color:#cfcfcf;">1</span>
<span class="t g" style="top:311px;left:81px;transform:translate(0.05px,0.80px) scaleX(0.8) rotate(.03deg);color:#cfcfcf;">Pay.PF</span>
<span class="t g" style="top:311px;left:141px;transform:translate(0.30px,0.80px) scaleX(0.82) rotate(.03deg);color:#cfcfcf;">18.07.2024</span>
<span class="t g" style="top:311px;left:189px;transform:translate(0.30px,0.80px) scaleX(0.82) rotate(.03deg);color:#cfcfcf;">17.08.2024</span>
<span class="t g" style="top:311px;left:282px;transform:translate(0.30px,0.80px) scaleX(0.82) rotate(.03deg);color:#cfcfcf;">30T</span>
<span class="t g r" style="top:311px;right:382px;transform:translate(-0.80px,0.80px) scaleX(0.82) rotate(.03deg);color:#cfcfcf;">50.00</span>
<span class="t g r" style="top:311px;right:338px;transform:translate(-0.80px,0.80px) scaleX(0.82) rotate(.03deg);color:#cfcfcf;">50.00</span>
<span class="t g r" style="top:311px;right:295px;transform:translate(-0.30px,0.80px) scaleX(0.82) rotate(.03deg);color:#cfcfcf;">0.00</span>
<span class="t g r" style="top:311px;right:251px;transform:translate(-0.80px,0.80px) scaleX(0.82) rotate(.03deg);color:#cfcfcf;">0.00</span>
<span class="t g r" style="top:311px;right:207px;transform:translate(-0.50px,0.80px) scaleX(0.82) rotate(.03deg);color:#cfcfcf;">0.00</span>
<span class="t g" style="top:311px;left:532px;transform:translate(0.60px,0.80px) scaleX(0.8) rotate(.03deg);color:#cfcfcf;">EUR</span>
<span class="t g" style="top:311px;left:552px;transform:translate(0.70px,0.80px) scaleX(0.8) rotate(.03deg);color:#cfcfcf;">PostFinance..</span>
<div class="hl" style="left:4.00px;top:331.30px;width:717.50px;height:1.00px;"></div>
<span class="t g r" style="top:322px;right:696px;transform:translate(-0.80px,0.40px) scaleX(0.82) rotate(.03deg);color:#111;">42</span>
<span class="t g r" style="top:322px;right:659px;transform:translate(-0.05px,0.40px) scaleX(0.82) rotate(.03deg);color:#111;">1</span>
<span class="t g" style="top:322px;left:81px;transform:translate(0.05px,0.40px) scaleX(0.8) rotate(.03deg);color:#111;">Pay.PF</span>
<span class="t g" style="top:322px;left:141px;transform:translate(0.30px,0.40px) scaleX(0.82) rotate(.03deg);color:#111;">18.07.2024</span>
<span class="t g" style="top:322px;left:189px;transform:translate(0.30px,0.40px) scaleX(0.82) rotate(.03deg);color:#111;">17.08.2024</span>
<span class="t g" style="top:322px;left:282px;transform:translate(0.30px,0.40px) scaleX(0.82) rotate(.03deg);color:#111;">30T</span>
<span class="t g r" style="top:322px;right:382px;transform:translate(-0.80px,0.40px) scaleX(0.82) rotate(.03deg);color:#2a2aee;">7'000.00</span>
<span class="t g r" style="top:322px;right:338px;transform:translate(-0.80px,0.40px) scaleX(0.82) rotate(.03deg);color:#111;">7'000.00</span>
<span class="t g r" style="top:322px;right:295px;transform:translate(-0.30px,0.40px) scaleX(0.82) rotate(.03deg);color:#2a2aee;">0.00</span>
<span class="t g r" style="top:322px;right:251px;transform:translate(-0.80px,0.40px) scaleX(0.82) rotate(.03deg);color:#2a2aee;">0.00</span>
<span class="t g r" style="top:322px;right:207px;transform:translate(-0.50px,0.40px) scaleX(0.82) rotate(.03deg);color:#2a2aee;">0.00</span>
<span class="t g" style="top:322px;left:532px;transform:translate(0.60px,0.40px) scaleX(0.8) rotate(.03deg);color:#111;">CHF</span>
<span class="t g" style="top:322px;left:552px;transform:translate(0.70px,0.40px) scaleX(0.8) rotate(.03deg);color:#111;">PostFinance..</span>
<svg style="left:602.90px;top:321.90px" width="6.200" height="7.800" viewBox="0 0 12 15"><path d="M6 .3L.3 6.800h2.900V14.500h5.600V6.800h2.900z" fill="#0a0a0a"/><path d="M6 3.600L4.700 6v5.300h2.600V6z" fill="#d8d8d8"/></svg>
<div class="hl" style="left:4.00px;top:341.90px;width:717.50px;height:1.00px;"></div>
<span class="t g r" style="top:333px;right:696px;transform:translate(-0.80px,0.00px) scaleX(0.82) rotate(.03deg);color:#111;">44</span>
<span class="t g r" style="top:333px;right:659px;transform:translate(-0.05px,0.00px) scaleX(0.82) rotate(.03deg);color:#111;">1</span>
<span class="t g" style="top:333px;left:81px;transform:translate(0.05px,0.00px) scaleX(0.8) rotate(.03deg);color:#111;">Pay.PF</span>
<span class="t g" style="top:333px;left:141px;transform:translate(0.30px,0.00px) scaleX(0.82) rotate(.03deg);color:#111;">18.07.2024</span>
<span class="t g" style="top:333px;left:189px;transform:translate(0.30px,0.00px) scaleX(0.82) rotate(.03deg);color:#111;">17.08.2024</span>
<span class="t g" style="top:333px;left:282px;transform:translate(0.30px,0.00px) scaleX(0.82) rotate(.03deg);color:#111;">30T</span>
<span class="t g r" style="top:333px;right:382px;transform:translate(-0.80px,0.00px) scaleX(0.82) rotate(.03deg);color:#2a2aee;">5'000.00</span>
<span class="t g r" style="top:333px;right:338px;transform:translate(-0.80px,0.00px) scaleX(0.82) rotate(.03deg);color:#111;">5'000.00</span>
<span class="t g r" style="top:333px;right:295px;transform:translate(-0.30px,0.00px) scaleX(0.82) rotate(.03deg);color:#2a2aee;">0.00</span>
<span class="t g r" style="top:333px;right:251px;transform:translate(-0.80px,0.00px) scaleX(0.82) rotate(.03deg);color:#2a2aee;">0.00</span>
<span class="t g r" style="top:333px;right:207px;transform:translate(-0.50px,0.00px) scaleX(0.82) rotate(.03deg);color:#2a2aee;">0.00</span>
<span class="t g" style="top:333px;left:532px;transform:translate(0.60px,0.00px) scaleX(0.8) rotate(.03deg);color:#111;">CHF</span>
<span class="t g" style="top:333px;left:552px;transform:translate(0.70px,0.00px) scaleX(0.8) rotate(.03deg);color:#111;">PostFinance..</span>
<svg style="left:602.90px;top:332.50px" width="6.200" height="7.800" viewBox="0 0 12 15"><path d="M6 .3L.3 6.800h2.900V14.500h5.600V6.800h2.900z" fill="#0a0a0a"/><path d="M6 3.600L4.700 6v5.300h2.600V6z" fill="#d8d8d8"/></svg>
<div class="hl" style="left:4.00px;top:352.50px;width:717.50px;height:1.00px;"></div>
<span class="t g r" style="top:343px;right:696px;transform:translate(-0.80px,0.60px) scaleX(0.82) rotate(.03deg);color:#111;">45</span>
<span class="t g r" style="top:343px;right:659px;transform:translate(-0.05px,0.60px) scaleX(0.82) rotate(.03deg);color:#111;">1</span>
<span class="t g" style="top:343px;left:81px;transform:translate(0.05px,0.60px) scaleX(0.8) rotate(.03deg);color:#111;">Pay.PF</span>
<span class="t g" style="top:343px;left:141px;transform:translate(0.30px,0.60px) scaleX(0.82) rotate(.03deg);color:#111;">18.07.2024</span>
<span class="t g" style="top:343px;left:189px;transform:translate(0.30px,0.60px) scaleX(0.82) rotate(.03deg);color:#111;">17.08.2024</span>
<span class="t g" style="top:343px;left:282px;transform:translate(0.30px,0.60px) scaleX(0.82) rotate(.03deg);color:#111;">30T</span>
<span class="t g r" style="top:343px;right:382px;transform:translate(-0.80px,0.60px) scaleX(0.82) rotate(.03deg);color:#2a2aee;">9'000.00</span>
<span class="t g r" style="top:343px;right:338px;transform:translate(-0.80px,0.60px) scaleX(0.82) rotate(.03deg);color:#111;">9'000.00</span>
<span class="t g r" style="top:343px;right:295px;transform:translate(-0.30px,0.60px) scaleX(0.82) rotate(.03deg);color:#2a2aee;">0.00</span>
<span class="t g r" style="top:343px;right:251px;transform:translate(-0.80px,0.60px) scaleX(0.82) rotate(.03deg);color:#2a2aee;">0.00</span>
<span class="t g r" style="top:343px;right:207px;transform:translate(-0.50px,0.60px) scaleX(0.82) rotate(.03deg);color:#2a2aee;">0.00</span>
<span class="t g" style="top:343px;left:532px;transform:translate(0.60px,0.60px) scaleX(0.8) rotate(.03deg);color:#111;">CHF</span>
<span class="t g" style="top:343px;left:552px;transform:translate(0.70px,0.60px) scaleX(0.8) rotate(.03deg);color:#111;">PostFinance..</span>
<svg style="left:602.90px;top:343.10px" width="6.200" height="7.800" viewBox="0 0 12 15"><path d="M6 .3L.3 6.800h2.900V14.500h5.600V6.800h2.900z" fill="#0a0a0a"/><path d="M6 3.600L4.700 6v5.300h2.600V6z" fill="#d8d8d8"/></svg>
<div class="hl" style="left:4.00px;top:363.10px;width:717.50px;height:1.00px;"></div>
<span class="t g r" style="top:354px;right:696px;transform:translate(-0.80px,0.20px) scaleX(0.82) rotate(.03deg);color:#111;">46</span>
<span class="t g r" style="top:354px;right:659px;transform:translate(-0.05px,0.20px) scaleX(0.82) rotate(.03deg);color:#111;">1</span>
<span class="t g" style="top:354px;left:81px;transform:translate(0.05px,0.20px) scaleX(0.8) rotate(.03deg);color:#111;">Pay.PF</span>
<span class="t g" style="top:354px;left:141px;transform:translate(0.30px,0.20px) scaleX(0.82) rotate(.03deg);color:#111;">18.07.2024</span>
<span class="t g" style="top:354px;left:189px;transform:translate(0.30px,0.20px) scaleX(0.82) rotate(.03deg);color:#111;">17.08.2024</span>
<span class="t g" style="top:354px;left:282px;transform:translate(0.30px,0.20px) scaleX(0.82) rotate(.03deg);color:#111;">30T</span>
<span class="t g r" style="top:354px;right:382px;transform:translate(-0.80px,0.20px) scaleX(0.82) rotate(.03deg);color:#2a2aee;">7'000.00</span>
<span class="t g r" style="top:354px;right:338px;transform:translate(-0.80px,0.20px) scaleX(0.82) rotate(.03deg);color:#111;">7'000.00</span>
<span class="t g r" style="top:354px;right:295px;transform:translate(-0.30px,0.20px) scaleX(0.82) rotate(.03deg);color:#2a2aee;">0.00</span>
<span class="t g r" style="top:354px;right:251px;transform:translate(-0.80px,0.20px) scaleX(0.82) rotate(.03deg);color:#2a2aee;">0.00</span>
<span class="t g r" style="top:354px;right:207px;transform:translate(-0.50px,0.20px) scaleX(0.82) rotate(.03deg);color:#2a2aee;">0.00</span>
<span class="t g" style="top:354px;left:532px;transform:translate(0.60px,0.20px) scaleX(0.8) rotate(.03deg);color:#111;">CHF</span>
<span class="t g" style="top:354px;left:552px;transform:translate(0.70px,0.20px) scaleX(0.8) rotate(.03deg);color:#111;">PostFinance..</span>
<svg style="left:602.90px;top:353.70px" width="6.200" height="7.800" viewBox="0 0 12 15"><path d="M6 .3L.3 6.800h2.900V14.500h5.600V6.800h2.900z" fill="#0a0a0a"/><path d="M6 3.600L4.700 6v5.300h2.600V6z" fill="#d8d8d8"/></svg>
<div class="hl" style="left:4.00px;top:373.70px;width:717.50px;height:1.00px;"></div>
<span class="t g r" style="top:364px;right:696px;transform:translate(-0.80px,0.80px) scaleX(0.82) rotate(.03deg);color:#111;">48</span>
<span class="t g r" style="top:364px;right:659px;transform:translate(-0.05px,0.80px) scaleX(0.82) rotate(.03deg);color:#111;">1</span>
<span class="t g" style="top:364px;left:81px;transform:translate(0.05px,0.80px) scaleX(0.8) rotate(.03deg);color:#111;">Pay.PF</span>
<span class="t g" style="top:364px;left:141px;transform:translate(0.30px,0.80px) scaleX(0.82) rotate(.03deg);color:#111;">19.07.2024</span>
<span class="t g" style="top:364px;left:189px;transform:translate(0.30px,0.80px) scaleX(0.82) rotate(.03deg);color:#111;">18.08.2024</span>
<span class="t g" style="top:364px;left:282px;transform:translate(0.30px,0.80px) scaleX(0.82) rotate(.03deg);color:#111;">30T</span>
<span class="t g r" style="top:364px;right:382px;transform:translate(-0.80px,0.80px) scaleX(0.82) rotate(.03deg);color:#f03030;">-500.00</span>
<span class="t g r" style="top:364px;right:338px;transform:translate(-0.80px,0.80px) scaleX(0.82) rotate(.03deg);color:#111;">-500.00</span>
<span class="t g r" style="top:364px;right:295px;transform:translate(-0.30px,0.80px) scaleX(0.82) rotate(.03deg);color:#f03030;">0.00</span>
<span class="t g r" style="top:364px;right:251px;transform:translate(-0.80px,0.80px) scaleX(0.82) rotate(.03deg);color:#f03030;">0.00</span>
<span class="t g r" style="top:364px;right:207px;transform:translate(-0.50px,0.80px) scaleX(0.82) rotate(.03deg);color:#f03030;">0.00</span>
<span class="t g" style="top:364px;left:532px;transform:translate(0.60px,0.80px) scaleX(0.8) rotate(.03deg);color:#111;">CHF</span>
<span class="t g" style="top:364px;left:552px;transform:translate(0.70px,0.80px) scaleX(0.8) rotate(.03deg);color:#111;">PostFinance..</span>
<svg style="left:602.90px;top:364.30px" width="6.200" height="7.800" viewBox="0 0 12 15"><path d="M6 .3L.3 6.800h2.900V14.500h5.600V6.800h2.900z" fill="#0a0a0a"/><path d="M6 3.600L4.700 6v5.300h2.600V6z" fill="#d8d8d8"/></svg>
<div class="hl" style="left:4.00px;top:384.30px;width:717.50px;height:1.00px;"></div>
<span class="t g r" style="top:375px;right:696px;transform:translate(-0.80px,0.40px) scaleX(0.82) rotate(.03deg);color:#111;">49</span>
<span class="t g r" style="top:375px;right:659px;transform:translate(-0.05px,0.40px) scaleX(0.82) rotate(.03deg);color:#111;">1</span>
<span class="t g" style="top:375px;left:81px;transform:translate(0.05px,0.40px) scaleX(0.8) rotate(.03deg);color:#111;">Pay.PF</span>
<span class="t g" style="top:375px;left:141px;transform:translate(0.30px,0.40px) scaleX(0.82) rotate(.03deg);color:#111;">08.08.2024</span>
<span class="t g" style="top:375px;left:189px;transform:translate(0.30px,0.40px) scaleX(0.82) rotate(.03deg);color:#111;">07.09.2024</span>
<span class="t g" style="top:375px;left:282px;transform:translate(0.30px,0.40px) scaleX(0.82) rotate(.03deg);color:#111;">30T</span>
<span class="t g r" style="top:375px;right:382px;transform:translate(-0.80px,0.40px) scaleX(0.82) rotate(.03deg);color:#2a2aee;">22'500.00</span>
<span class="t g r" style="top:375px;right:338px;transform:translate(-0.80px,0.40px) scaleX(0.82) rotate(.03deg);color:#111;">22'500.00</span>
<span class="t g r" style="top:375px;right:295px;transform:translate(-0.30px,0.40px) scaleX(0.82) rotate(.03deg);color:#2a2aee;">0.00</span>
<span class="t g r" style="top:375px;right:251px;transform:translate(-0.80px,0.40px) scaleX(0.82) rotate(.03deg);color:#2a2aee;">0.00</span>
<span class="t g r" style="top:375px;right:207px;transform:translate(-0.50px,0.40px) scaleX(0.82) rotate(.03deg);color:#2a2aee;">0.00</span>
<span class="t g" style="top:375px;left:532px;transform:translate(0.60px,0.40px) scaleX(0.8) rotate(.03deg);color:#111;">CHF</span>
<span class="t g" style="top:375px;left:552px;transform:translate(0.70px,0.40px) scaleX(0.8) rotate(.03deg);color:#111;">PostFinance..</span>
<svg style="left:602.90px;top:374.90px" width="6.200" height="7.800" viewBox="0 0 12 15"><path d="M6 .3L.3 6.800h2.900V14.500h5.600V6.800h2.900z" fill="#0a0a0a"/><path d="M6 3.600L4.700 6v5.300h2.600V6z" fill="#d8d8d8"/></svg>
<div class="hl" style="left:4.00px;top:394.90px;width:717.50px;height:1.00px;"></div>
<span class="t g r" style="top:386px;right:696px;transform:translate(-0.80px,0.00px) scaleX(0.82) rotate(.03deg);color:#cfcfcf;">50</span>
<span class="t g r" style="top:386px;right:659px;transform:translate(-0.05px,0.00px) scaleX(0.82) rotate(.03deg);color:#cfcfcf;">1</span>
<span class="t g" style="top:386px;left:81px;transform:translate(0.05px,0.00px) scaleX(0.8) rotate(.03deg);color:#cfcfcf;">Pay.PF</span>
<span class="t g" style="top:386px;left:141px;transform:translate(0.30px,0.00px) scaleX(0.82) rotate(.03deg);color:#cfcfcf;">08.08.2024</span>
<span class="t g" style="top:386px;left:189px;transform:translate(0.30px,0.00px) scaleX(0.82) rotate(.03deg);color:#cfcfcf;">07.09.2024</span>
<span class="t g" style="top:386px;left:282px;transform:translate(0.30px,0.00px) scaleX(0.82) rotate(.03deg);color:#cfcfcf;">30T</span>
<span class="t g r" style="top:386px;right:382px;transform:translate(-0.80px,0.00px) scaleX(0.82) rotate(.03deg);color:#cfcfcf;">450.00</span>
<span class="t g r" style="top:386px;right:338px;transform:translate(-0.80px,0.00px) scaleX(0.82) rotate(.03deg);color:#cfcfcf;">450.00</span>
<span class="t g r" style="top:386px;right:295px;transform:translate(-0.30px,0.00px) scaleX(0.82) rotate(.03deg);color:#cfcfcf;">0.00</span>
<span class="t g r" style="top:386px;right:251px;transform:translate(-0.80px,0.00px) scaleX(0.82) rotate(.03deg);color:#cfcfcf;">0.00</span>
<span class="t g r" style="top:386px;right:207px;transform:translate(-0.50px,0.00px) scaleX(0.82) rotate(.03deg);color:#cfcfcf;">0.00</span>
<span class="t g" style="top:386px;left:532px;transform:translate(0.60px,0.00px) scaleX(0.8) rotate(.03deg);color:#cfcfcf;">EUR</span>
<span class="t g" style="top:386px;left:552px;transform:translate(0.70px,0.00px) scaleX(0.8) rotate(.03deg);color:#cfcfcf;">PostFinance..</span>
<div class="hl" style="left:4.00px;top:405.50px;width:717.50px;height:1.00px;"></div>
<span class="t g r" style="top:396px;right:696px;transform:translate(-0.80px,0.60px) scaleX(0.82) rotate(.03deg);color:#cfcfcf;">51</span>
<span class="t g r" style="top:396px;right:659px;transform:translate(-0.05px,0.60px) scaleX(0.82) rotate(.03deg);color:#cfcfcf;">1</span>
<span class="t g" style="top:396px;left:81px;transform:translate(0.05px,0.60px) scaleX(0.8) rotate(.03deg);color:#cfcfcf;">Pay.PF</span>
<span class="t g" style="top:396px;left:141px;transform:translate(0.30px,0.60px) scaleX(0.82) rotate(.03deg);color:#cfcfcf;">08.08.2024</span>
<span class="t g" style="top:396px;left:189px;transform:translate(0.30px,0.60px) scaleX(0.82) rotate(.03deg);color:#cfcfcf;">07.09.2024</span>
<span class="t g" style="top:396px;left:282px;transform:translate(0.30px,0.60px) scaleX(0.82) rotate(.03deg);color:#cfcfcf;">30T</span>
<span class="t g r" style="top:396px;right:382px;transform:translate(-0.80px,0.60px) scaleX(0.82) rotate(.03deg);color:#cfcfcf;">340.00</span>
<span class="t g r" style="top:396px;right:338px;transform:translate(-0.80px,0.60px) scaleX(0.82) rotate(.03deg);color:#cfcfcf;">340.00</span>
<span class="t g r" style="top:396px;right:295px;transform:translate(-0.30px,0.60px) scaleX(0.82) rotate(.03deg);color:#cfcfcf;">0.00</span>
<span class="t g r" style="top:396px;right:251px;transform:translate(-0.80px,0.60px) scaleX(0.82) rotate(.03deg);color:#cfcfcf;">0.00</span>
<span class="t g r" style="top:396px;right:207px;transform:translate(-0.50px,0.60px) scaleX(0.82) rotate(.03deg);color:#cfcfcf;">0.00</span>
<span class="t g" style="top:396px;left:532px;transform:translate(0.60px,0.60px) scaleX(0.8) rotate(.03deg);color:#cfcfcf;">EUR</span>
<span class="t g" style="top:396px;left:552px;transform:translate(0.70px,0.60px) scaleX(0.8) rotate(.03deg);color:#cfcfcf;">PostFinance..</span>
<div class="hl" style="left:4.00px;top:416.10px;width:717.50px;height:1.00px;"></div>
<span class="t g r" style="top:407px;right:696px;transform:translate(-0.80px,0.20px) scaleX(0.82) rotate(.03deg);color:#cfcfcf;">52</span>
<span class="t g r" style="top:407px;right:659px;transform:translate(-0.05px,0.20px) scaleX(0.82) rotate(.03deg);color:#cfcfcf;">1</span>
<span class="t g" style="top:407px;left:81px;transform:translate(0.05px,0.20px) scaleX(0.8) rotate(.03deg);color:#cfcfcf;">Pay.PF</span>
<span class="t g" style="top:407px;left:141px;transform:translate(0.30px,0.20px) scaleX(0.82) rotate(.03deg);color:#cfcfcf;">08.08.2024</span>
<span class="t g" style="top:407px;left:189px;transform:translate(0.30px,0.20px) scaleX(0.82) rotate(.03deg);color:#cfcfcf;">07.09.2024</span>
<span class="t g" style="top:407px;left:282px;transform:translate(0.30px,0.20px) scaleX(0.82) rotate(.03deg);color:#cfcfcf;">30T</span>
<span class="t g r" style="top:407px;right:382px;transform:translate(-0.80px,0.20px) scaleX(0.82) rotate(.03deg);color:#cfcfcf;">3'450.00</span>
<span class="t g r" style="top:407px;right:338px;transform:translate(-0.80px,0.20px) scaleX(0.82) rotate(.03deg);color:#cfcfcf;">3'450.00</span>
<span class="t g r" style="top:407px;right:295px;transform:translate(-0.30px,0.20px) scaleX(0.82) rotate(.03deg);color:#cfcfcf;">0.00</span>
<span class="t g r" style="top:407px;right:251px;transform:translate(-0.80px,0.20px) scaleX(0.82) rotate(.03deg);color:#cfcfcf;">0.00</span>
<span class="t g r" style="top:407px;right:207px;transform:translate(-0.50px,0.20px) scaleX(0.82) rotate(.03deg);color:#cfcfcf;">0.00</span>
<span class="t g" style="top:407px;left:532px;transform:translate(0.60px,0.20px) scaleX(0.8) rotate(.03deg);color:#cfcfcf;">EUR</span>
<span class="t g" style="top:407px;left:552px;transform:translate(0.70px,0.20px) scaleX(0.8) rotate(.03deg);color:#cfcfcf;">PostFinance..</span>
<div class="hl" style="left:4.00px;top:426.70px;width:717.50px;height:1.00px;"></div>
<div class="vl" style="left:40.50px;top:268.20px;width:1.00px;height:165.10px;"></div>
<div class="vl" style="left:78.25px;top:268.20px;width:1.00px;height:165.10px;"></div>
<div class="vl" style="left:138.50px;top:268.20px;width:1.00px;height:165.10px;"></div>
<div class="vl" style="left:186.50px;top:268.20px;width:1.00px;height:165.10px;"></div>
<div class="vl" style="left:232.50px;top:268.20px;width:1.00px;height:165.10px;"></div>
<div class="vl" style="left:279.50px;top:268.20px;width:1.00px;height:165.10px;"></div>
<div class="vl" style="left:310.50px;top:268.20px;width:1.00px;height:165.10px;"></div>
<div class="vl" style="left:354.50px;top:268.20px;width:1.00px;height:165.10px;"></div>
<div class="vl" style="left:398.50px;top:268.20px;width:1.00px;height:165.10px;"></div>
<div class="vl" style="left:442.00px;top:268.20px;width:1.00px;height:165.10px;"></div>
<div class="vl" style="left:485.50px;top:268.20px;width:1.00px;height:165.10px;"></div>
<div class="vl" style="left:529.80px;top:268.20px;width:1.00px;height:165.10px;"></div>
<div class="vl" style="left:550.50px;top:268.20px;width:1.00px;height:165.10px;"></div>
<div class="vl" style="left:599.50px;top:268.20px;width:1.00px;height:165.10px;"></div>
<div class="vl" style="left:612.00px;top:268.20px;width:1.00px;height:165.10px;"></div>
<div class="sb" style="left:721.50px;top:245.80px;width:10.00px;height:187.50px;"></div>
<svg style="left:724.50px;top:250.10px" width="5.500" height="4" viewBox="0 0 10 7"><path d="M0 7h10L5 0z" fill="#a8a8a8"/></svg>
<svg style="left:724.50px;top:426.90px" width="5.500" height="4" viewBox="0 0 10 7"><path d="M0 0h10L5 7z" fill="#a8a8a8"/></svg>
<div class="btn" style="left:547.00px;top:439.00px;width:83.00px;height:12.20px;"></div>
<span class="t g" style="top:441px;left:572px;transform:translate(0.30px,0.00px) scaleX(0.8) rotate(.03deg);">Speichern</span>
<div class="btn" style="left:636.00px;top:439.00px;width:85.30px;height:12.20px;"></div>
<span class="t g" style="top:441px;left:667px;transform:translate(0.50px,0.00px) scaleX(0.8) rotate(.03deg);">Cancel</span>
<div class="status" style="left:0.00px;top:456.00px;width:736.00px;height:16.00px;"></div>
<span class="t seg" style="top:459px;left:8px;transform:translate(0.00px,0.50px) scaleX(0.955) rotate(.03deg);color:#1a2238;font-size:7.800px;-webkit-text-stroke:.2px #1a2238;">Letzte Änderung durch :</span>
<div class="" style="left:98.50px;top:459.50px;width:1.00px;height:9.50px;background:#a6bde2;box-shadow:1px 0 0 #d6e4f9"></div>
<span class="t seg" style="top:459px;left:102px;transform:translate(0.00px,0.50px) scaleX(0.94) rotate(.03deg);color:#1a2238;font-size:7.800px;-webkit-text-stroke:.2px #1a2238;">am :</span>
<svg style="left:726px;top:462px" width="8" height="8" viewBox="0 0 8 8"><g fill="#8fa6cc"><rect x="5.5" y="0.5" width="1.300" height="1.300"/><rect x="3" y="3" width="1.300" height="1.300"/><rect x="5.5" y="3" width="1.300" height="1.300"/><rect x="0.5" y="5.5" width="1.300" height="1.300"/><rect x="3" y="5.5" width="1.300" height="1.300"/><rect x="5.5" y="5.5" width="1.300" height="1.300"/></g></svg>
</div></div></body></html>
